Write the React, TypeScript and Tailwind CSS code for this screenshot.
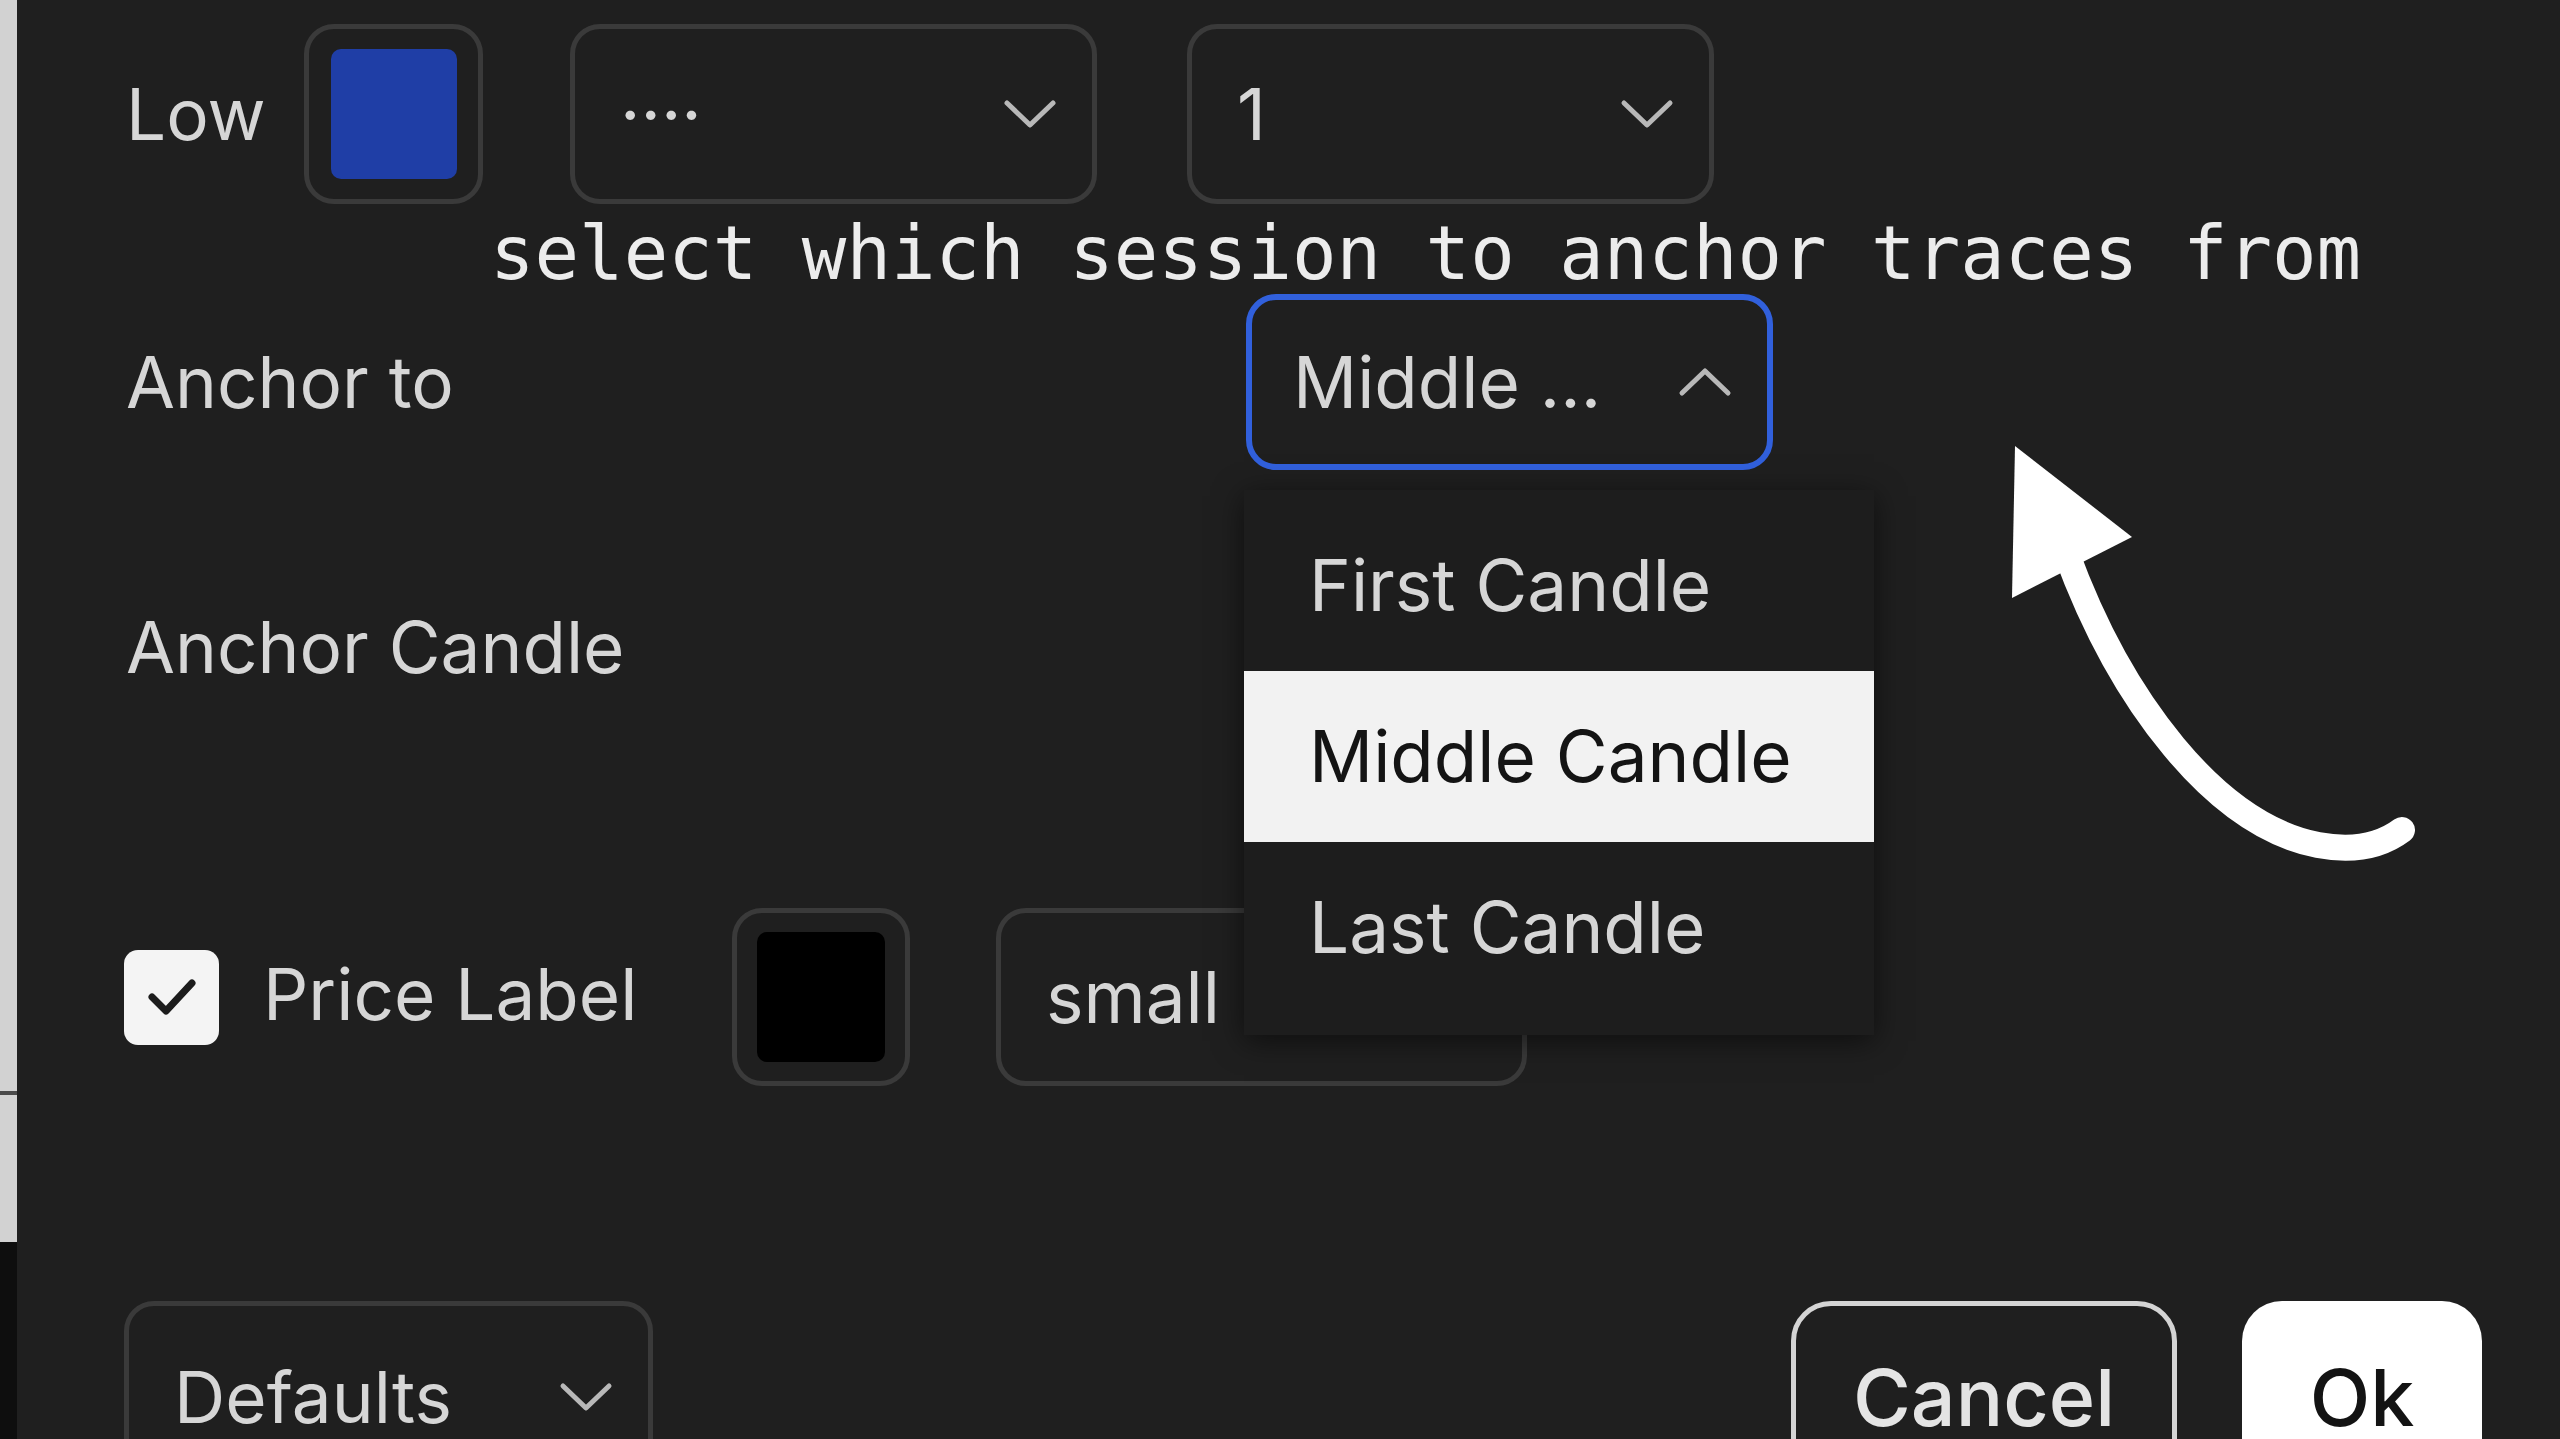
import React from 'react';
import clsx from 'clsx';

const Chevron = ({ up = false }: { up?: boolean }) => (
  <svg width="56" height="32" viewBox="0 0 56 32" fill="none" className="shrink-0">
    <path
      d={up ? 'M5 27 L28 5 L51 27' : 'M5 5 L28 27 L51 5'}
      stroke="#b8b8b8"
      strokeWidth="5"
      strokeLinecap="round"
      strokeLinejoin="round"
    />
  </svg>
);

const Select = ({
  value,
  className,
  focused = false,
  open = false,
}: {
  value: string;
  className?: string;
  focused?: boolean;
  open?: boolean;
}) => (
  <div
    className={clsx(
      'flex shrink-0 items-center justify-between rounded-[30px] pr-[34px]',
      focused ? 'border-[6px] border-[#3160dc] pl-[41px]' : 'border-[5px] border-[#3a3a3a] pl-[45px]',
      className,
    )}
  >
    <span className="whitespace-nowrap">{value}</span>
    <Chevron up={open} />
  </div>
);

const Swatch = ({ color }: { color: string }) => (
  <div className="flex h-[180px] w-[179px] shrink-0 items-center justify-center rounded-[30px] border-[5px] border-[#3a3a3a]">
    <div className={clsx('h-[130px] w-[126px] rounded-[10px]', color)} />
  </div>
);

const MENU = ['First Candle', 'Middle Candle', 'Last Candle'];

export default function App() {
  return (
    <div className="relative flex h-[1439px] w-[2560px] overflow-hidden bg-[#1f1f1f] font-[Inter,'Noto_Sans',sans-serif] text-[71px] leading-none text-[#d6d6d6]">
      {/* window edge on the left */}
      <div className="flex w-[17px] shrink-0 flex-col">
        <div className="flex h-[1242px] flex-col bg-[#d2d2d2]">
          <div className="mt-[1091px] h-[4px] w-full bg-[#4a4a4a]" />
        </div>
        <div className="flex-1 bg-[#0e0e0e]" />
      </div>

      <div className="flex flex-1 flex-col">
        <div className="flex flex-col pl-[107px] pt-[24px]">
          {/* Low row */}
          <div className="flex h-[180px] items-center">
            <span className="w-[180px] pl-[2px]">Low</span>
            <Swatch color="bg-[#1f3ea6]" />
            <Select value="····" className="ml-[87px] h-[180px] w-[527px]" />
            <Select value="1" className="ml-[90px] h-[180px] w-[527px]" />
          </div>

          {/* tooltip text */}
          <div className="ml-[366px] h-[90px] whitespace-nowrap font-['DejaVu_Sans_Mono',monospace] text-[74px] leading-[98px] text-[#ececec]">
            select which session to anchor traces from
          </div>

          {/* Anchor to */}
          <div className="flex h-[176px] items-center">
            <span className="w-[1122px] pl-[2px]">Anchor to</span>
            <Select value="Middle ..." focused open className="h-[176px] w-[527px]" />
          </div>

          {/* Anchor Candle */}
          <div className="mt-[89px] flex h-[176px] items-center">
            <span className="pl-[2px]">Anchor Candle</span>
          </div>

          {/* Price Label */}
          <div className="mt-[173px] flex h-[178px] items-center">
            <div className="flex h-[95px] w-[95px] shrink-0 items-center justify-center rounded-[14px] bg-[#f4f4f4]">
              <svg width="56" height="44" viewBox="0 0 56 44" fill="none">
                <path d="M8 22 L22 36 L48 8" stroke="#1c1c1c" strokeWidth="7" strokeLinecap="round" strokeLinejoin="round" />
              </svg>
            </div>
            <span className="ml-[44px] w-[469px] -translate-y-[3px]">Price Label</span>
            <div className="flex h-[178px] w-[178px] shrink-0 items-center justify-center rounded-[30px] border-[5px] border-[#3a3a3a]">
              <div className="h-[130px] w-[128px] rounded-[10px] bg-black" />
            </div>
            <Select value="small" className="ml-[86px] h-[178px] w-[531px]" />
          </div>
        </div>

        <div className="ml-[6px] mt-[128px] h-[5px] bg-[#3a3a3a]" />

        {/* footer */}
        <div className="flex items-start justify-between pl-[107px] pr-[78px] pt-[87px]">
          <Select value="Defaults" className="h-[192px] w-[529px]" />
          <div className="flex gap-[65px]">
            <button className="flex h-[192px] w-[386px] items-center justify-center rounded-[40px] border-[5px] border-[#d4d4d4] text-[79px] font-medium text-[#e4e4e4]">
              Cancel
            </button>
            <button className="flex h-[192px] w-[240px] items-center justify-center rounded-[40px] bg-white text-[79px] font-medium text-[#131313]">
              Ok
            </button>
          </div>
        </div>
      </div>

      {/* open dropdown */}
      <div className="absolute left-[1244px] top-[490px] flex w-[630px] flex-col bg-[#1d1d1d] pb-[22px] pt-[10px] shadow-[0_6px_28px_rgba(0,0,0,0.55)]">
        {MENU.map((item) => (
          <div
            key={item}
            className={clsx(
              'flex h-[171px] items-center pl-[65px]',
              item === 'Middle Candle' ? 'bg-[#f2f2f2] text-[#141414]' : 'text-[#d6d6d6]',
            )}
          >
            {item}
          </div>
        ))}
      </div>

      {/* hand drawn arrow */}
      <svg className="pointer-events-none absolute left-0 top-0" width="2560" height="1439" viewBox="0 0 2560 1439" fill="none">
        <polygon points="2015,446 2132,537 2012,598" fill="#ffffff" />
        <path
          d="M2066 552 C2120 700, 2215 825, 2318 845 C2355 852, 2382 845, 2402 830"
          stroke="#ffffff"
          strokeWidth="26"
          strokeLinecap="round"
        />
      </svg>
    </div>
  );
}
